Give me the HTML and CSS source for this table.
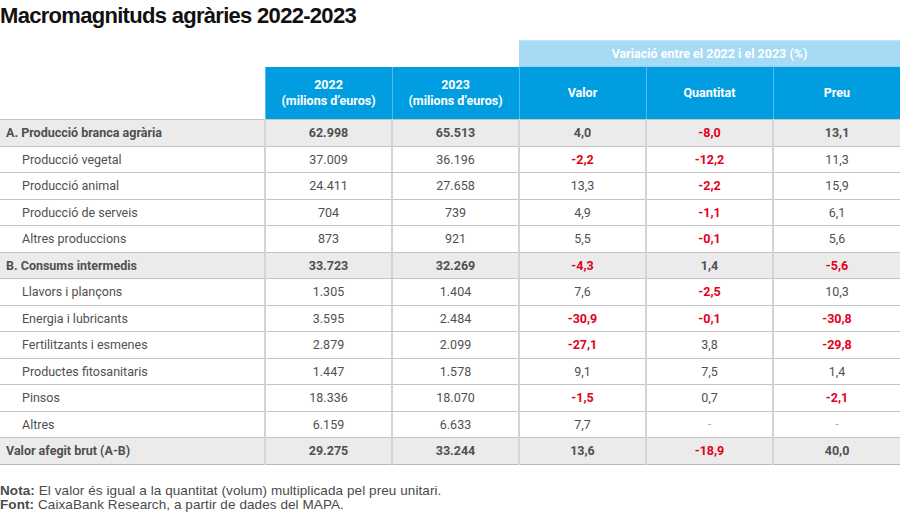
FILE: index.html
```html
<!DOCTYPE html>
<html lang="ca">
<head>
<meta charset="utf-8">
<title>Macromagnituds agràries 2022-2023</title>
<link rel="stylesheet" href="styles.css">
</head>
<body>
<h1 class="title">Macromagnituds agràries 2022-2023</h1>
<table class="data">
  <colgroup>
    <col class="c-label"><col class="c-num"><col class="c-num"><col class="c-num"><col class="c-num"><col class="c-num">
  </colgroup>
  <thead>
    <tr class="super">
      <th class="blank"></th><th class="blank"></th><th class="blank"></th>
      <th colspan="3" class="super-cell">Variació entre el 2022 i el 2023 (%)</th>
    </tr>
    <tr class="head">
      <th class="blank"></th>
      <th>2022<br>(milions d’euros)</th>
      <th>2023<br>(milions d’euros)</th>
      <th>Valor</th>
      <th>Quantitat</th>
      <th>Preu</th>
    </tr>
  </thead>
  <tbody>
    <tr class="sec"><td>A. Producció branca agrària</td><td>62.998</td><td>65.513</td><td>4,0</td><td class="neg">-8,0</td><td>13,1</td></tr>
    <tr><td class="sub">Producció vegetal</td><td>37.009</td><td>36.196</td><td class="neg">-2,2</td><td class="neg">-12,2</td><td>11,3</td></tr>
    <tr><td class="sub">Producció animal</td><td>24.411</td><td>27.658</td><td>13,3</td><td class="neg">-2,2</td><td>15,9</td></tr>
    <tr><td class="sub">Producció de serveis</td><td>704</td><td>739</td><td>4,9</td><td class="neg">-1,1</td><td>6,1</td></tr>
    <tr><td class="sub">Altres produccions</td><td>873</td><td>921</td><td>5,5</td><td class="neg">-0,1</td><td>5,6</td></tr>
    <tr class="sec"><td>B. Consums intermedis</td><td>33.723</td><td>32.269</td><td class="neg">-4,3</td><td>1,4</td><td class="neg">-5,6</td></tr>
    <tr><td class="sub">Llavors i plançons</td><td>1.305</td><td>1.404</td><td>7,6</td><td class="neg">-2,5</td><td>10,3</td></tr>
    <tr><td class="sub">Energia i lubricants</td><td>3.595</td><td>2.484</td><td class="neg">-30,9</td><td class="neg">-0,1</td><td class="neg">-30,8</td></tr>
    <tr><td class="sub">Fertilitzants i esmenes</td><td>2.879</td><td>2.099</td><td class="neg">-27,1</td><td>3,8</td><td class="neg">-29,8</td></tr>
    <tr><td class="sub">Productes fitosanitaris</td><td>1.447</td><td>1.578</td><td>9,1</td><td>7,5</td><td>1,4</td></tr>
    <tr><td class="sub">Pinsos</td><td>18.336</td><td>18.070</td><td class="neg">-1,5</td><td>0,7</td><td class="neg">-2,1</td></tr>
    <tr><td class="sub">Altres</td><td>6.159</td><td>6.633</td><td>7,7</td><td class="dash">-</td><td class="dash">-</td></tr>
    <tr class="sec"><td>Valor afegit brut (A-B)</td><td>29.275</td><td>33.244</td><td>13,6</td><td class="neg">-18,9</td><td>40,0</td></tr>
  </tbody>
</table>
<div class="notes">
  <p><span class="lbl">Nota:</span> El valor és igual a la quantitat (volum) multiplicada pel preu unitari.</p>
  <p><span class="lbl">Font:</span> CaixaBank Research, a partir de dades del MAPA.</p>
</div>
</body>
</html>
```

FILE: styles.css
```css
html, body {
  margin: 0;
  padding: 0;
  background: #ffffff;
}
body {
  width: 900px;
  font-family: "Liberation Sans", Arial, sans-serif;
  color: #4a4a4a;
}
.title {
  margin: 0;
  height: 40px;
  padding-top: 4px;
  box-sizing: border-box;
  font-size: 22px;
  line-height: 24px;
  font-weight: bold;
  color: #111111;
  letter-spacing: -0.7px;
}
.data {
  width: 900px;
  table-layout: fixed;
  border-collapse: collapse;
  font-family: Roboto, "Liberation Sans", Arial, sans-serif;
  font-size: 12.5px;
}
.c-label { width: 265px; }
.c-num { width: 127px; }
.data th, .data td {
  padding: 0;
  text-align: center;
  vertical-align: middle;
}
.super th { height: 25px; }
.super-cell {
  background: #a6daf5;
  color: #ffffff;
  font-weight: bold;
  font-size: 12.5px;
  border-top: 1px solid #c2e6f9;
  border-bottom: 1px solid #8bd0f2;
}
.head th {
  height: 52px;
  background: #009ee0;
  color: #ffffff;
  font-weight: bold;
  font-size: 12.5px;
  line-height: 16px;
  border-left: 1px solid #52bbea;
}
.data th.blank {
  background: transparent;
  border: none;
}
.data tbody td {
  height: 25.5px;
  border-top: 1px solid #c4c4c4;
  border-left: 2px solid #d4d4d4;
  color: #505050;
}
.data tbody td:first-child {
  border-left: none;
  text-align: left;
  padding-left: 6px;
}
.data tbody td.sub {
  padding-left: 22px;
}
.data tbody tr:last-child td {
  border-bottom: 1px solid #b8b8b8;
}
.sec td {
  background: #ebebeb;
  font-weight: bold;
}
.data td.neg {
  color: #e2001a;
  font-weight: bold;
}
.data td.dash {
  color: #9a9a9a;
  font-size: 11px;
}
.notes {
  padding-top: 19px;
  font-size: 13.5px;
  line-height: 14px;
  color: #4a4a4a;
  letter-spacing: 0.08px;
}
.notes p { margin: 0; }
.lbl { font-weight: bold; }
```
